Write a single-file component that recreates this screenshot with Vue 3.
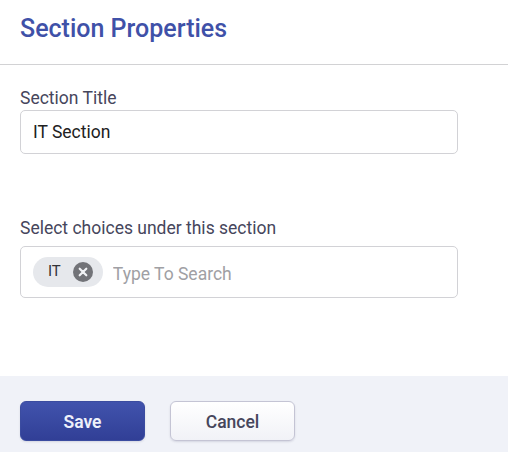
<template>
  <div class="panel">
    <header class="panel-header">
      <h2>Section Properties</h2>
    </header>

    <div class="panel-body">
      <div class="field field-title">
        <label>Section Title</label>
        <input class="text-input" type="text" value="IT Section" />
      </div>

      <div class="field field-choices">
        <label>Select choices under this section</label>
        <div class="tag-input">
          <span class="tag">
            <span class="tag-text">IT</span>
            <svg class="tag-close" width="20" height="20" viewBox="0 0 20 20">
              <circle cx="10" cy="10" r="10" fill="#727378" />
              <path d="M6.7 6.7l6.6 6.6M13.3 6.7l-6.6 6.6" stroke="#f1f2f5" stroke-width="2.2" stroke-linecap="round" />
            </svg>
          </span>
          <input class="search-input" type="text" placeholder="Type To Search" />
        </div>
      </div>
    </div>

    <footer class="panel-footer">
      <button class="btn btn-primary">Save</button>
      <button class="btn btn-secondary">Cancel</button>
    </footer>
  </div>
</template>

<script setup>
</script>

<style>
html, body {
  margin: 0;
  height: 100%;
  overflow: hidden;
  background: #fff;
}
</style>

<style scoped>
.panel {
  display: flex;
  flex-direction: column;
  width: 508px;
  height: 452px;
  font-family: Roboto, "Liberation Sans", sans-serif;
  color: #46465c;
}

.panel-header {
  height: 64px;
  padding: 0 20px;
  border-bottom: 1px solid #d2d2d4;
  box-sizing: content-box;
}

.panel-header h2 {
  margin: 0;
  padding-top: 15px;
  font-size: 25px;
  line-height: 28px;
  font-weight: 500;
  color: #3f51a8;
}

.panel-body {
  flex: 1;
  padding: 23px 50px 0 20px;
}

.field label {
  display: block;
  font-size: 17.5px;
  line-height: 20px;
  margin-bottom: 2px;
}

.field-choices {
  margin-top: 64px;
}

.field-choices label {
  margin-bottom: 8px;
}

.text-input {
  display: block;
  width: 100%;
  height: 44px;
  box-sizing: border-box;
  padding: 0 12px;
  border: 1px solid #d2d2d6;
  border-radius: 5px;
  outline: none;
  font-family: inherit;
  font-size: 17.5px;
  color: #212121;
}

.tag-input {
  display: flex;
  align-items: center;
  height: 52px;
  box-sizing: border-box;
  padding: 0 12px;
  border: 1px solid #d2d2d6;
  border-radius: 5px;
}

.tag {
  display: flex;
  align-items: center;
  height: 30px;
  padding: 0 10px 0 15px;
  border-radius: 15px;
  background: #e6e8ec;
}

.tag-text {
  font-size: 15px;
  line-height: 28px;
  margin-top: -2px;
  color: #333338;
  margin-right: 12px;
}

.tag-close {
  display: block;
}

.search-input {
  flex: 1;
  min-width: 0;
  margin-left: 10px;
  margin-top: 4px;
  padding: 0;
  border: none;
  outline: none;
  font-family: inherit;
  font-size: 17.5px;
}

.search-input::placeholder {
  color: #a0a0a4;
  opacity: 1;
}

.panel-footer {
  display: flex;
  align-items: center;
  gap: 25px;
  height: 76px;
  padding: 0 20px;
  box-sizing: border-box;
  background: #f0f2f8;
}

.btn {
  width: 125px;
  height: 40px;
  margin-top: 13px;
  padding: 2px 0 0;
  border-radius: 6px;
  font-family: inherit;
  font-size: 17.5px;
  font-weight: 500;
  box-shadow: 0 1px 2px rgba(60, 60, 100, 0.15);
}

.btn-primary {
  border: 1px solid #3b4ca0;
  background: linear-gradient(#4153ad, #313f96);
  color: #eef0fa;
  font-weight: 600;
}

.btn-secondary {
  border: 1px solid #c4c4d4;
  background: linear-gradient(#ffffff, #f1f2f7);
  color: #46465c;
}
</style>
